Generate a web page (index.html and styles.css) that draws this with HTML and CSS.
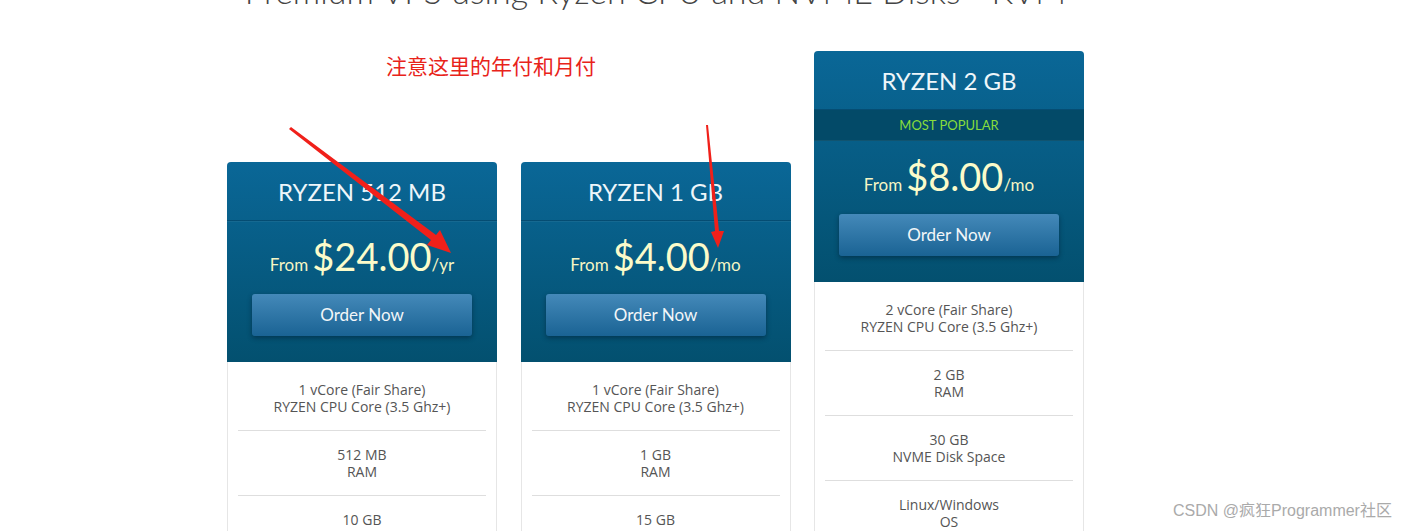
FILE: index.html
```html
<!DOCTYPE html>
<html lang="en">
<head>
  <meta charset="UTF-8">
  <meta name="viewport" content="width=device-width, initial-scale=1.0">
  <title>Ryzen VPS</title>
  <link rel="stylesheet" href="styles.css">
</head>
<body>
  <main class="wrap">
    <h1 class="page-title">Premium VPS using Ryzen CPU and NVME Disks - KVM</h1>

    <section class="plans">
      <div class="plan plan-low">
        <div class="plan-head">
          <h2 class="plan-name">RYZEN 512 MB</h2>
          <div class="plan-price">
            <p class="price"><span class="from">From</span> <span class="amount">$24.00</span><span class="cycle">/yr</span></p>
            <a class="order-btn" href="#">Order Now</a>
          </div>
        </div>
        <ul class="features">
          <li>1 vCore (Fair Share)<br>RYZEN CPU Core (3.5 Ghz+)</li>
          <li>512 MB<br>RAM</li>
          <li>10 GB<br>NVME Disk Space</li>
        </ul>
      </div>

      <div class="plan plan-low">
        <div class="plan-head">
          <h2 class="plan-name">RYZEN 1 GB</h2>
          <div class="plan-price">
            <p class="price"><span class="from">From</span> <span class="amount">$4.00</span><span class="cycle">/mo</span></p>
            <a class="order-btn" href="#">Order Now</a>
          </div>
        </div>
        <ul class="features">
          <li>1 vCore (Fair Share)<br>RYZEN CPU Core (3.5 Ghz+)</li>
          <li>1 GB<br>RAM</li>
          <li>15 GB<br>NVME Disk Space</li>
        </ul>
      </div>

      <div class="plan">
        <div class="plan-head">
          <h2 class="plan-name">RYZEN 2 GB</h2>
          <div class="popular">MOST POPULAR</div>
          <div class="plan-price">
            <p class="price"><span class="from">From</span> <span class="amount">$8.00</span><span class="cycle">/mo</span></p>
            <a class="order-btn" href="#">Order Now</a>
          </div>
        </div>
        <ul class="features">
          <li>2 vCore (Fair Share)<br>RYZEN CPU Core (3.5 Ghz+)</li>
          <li>2 GB<br>RAM</li>
          <li>30 GB<br>NVME Disk Space</li>
          <li>Linux/Windows<br>OS</li>
        </ul>
      </div>
    </section>
  </main>

  <!-- annotation layer drawn over the screenshot -->
  <div class="note">注意这里的年付和月付</div>
  <svg class="arrows" width="1405" height="531" viewBox="0 0 1405 531">
    <polygon fill="#f0201a" points="289,129 291,127 436,235 440,230 451,253 427,245 431,240"/>
    <polygon fill="#f0201a" points="706,125 708,125 719,231 724,231 718,248 711,232 715,231"/>
  </svg>
  <div class="watermark">CSDN @疯狂Programmer社区</div>
</body>
</html>
```

FILE: styles.css
```css
* {
  padding: 0;
  margin: 0;
  box-sizing: border-box;
}
html, body {
  height: 100%;
  overflow: hidden;
}
body {
  background-color: #fff;
  font-family: "Open Sans", "Liberation Sans", sans-serif;
  color: #555;
}
.wrap {
  width: 857px;
  margin-left: 227px;
}
.page-title {
  margin: -29px -30px 0 -30px;
  height: 80px;
  font-family: Lato, "Liberation Sans", sans-serif;
  font-weight: 300;
  font-size: 34px;
  line-height: 40px;
  color: #444;
  text-align: center;
  white-space: nowrap;
}
.plans {
  display: flex;
  align-items: flex-start;
  gap: 23.5px;
}
.plan {
  width: 270px;
  flex: none;
  border-radius: 4px 4px 0 0;
  border: 1px solid #e6e6e6;
  border-top: none;
  background-color: #fff;
}
.plan-low {
  margin-top: 111px;
}
.plan-head {
  margin: 0 -1px;
  border-radius: 4px 4px 0 0;
  background: linear-gradient(#0a6797, #03506f);
  color: #fff;
  text-align: center;
}
.plan-name {
  height: 59px;
  font-family: Lato, "Liberation Sans", sans-serif;
  font-weight: 400;
  font-size: 24px;
  line-height: 59px;
  color: #eef6fa;
  border-bottom: 1px solid rgba(0, 40, 70, .35);
  box-shadow: 0 1px 0 rgba(255, 255, 255, .06);
}
.popular {
  height: 31px;
  background-color: #034a68;
  font-family: Lato, "Liberation Sans", sans-serif;
  font-size: 13px;
  line-height: 31px;
  color: #86dc3c;
  border-bottom: 1px solid rgba(255, 255, 255, .06);
}
.plan-price {
  height: 141px;
  padding-top: 10px;
}
.price {
  height: 63px;
  font-family: Lato, "Liberation Sans", sans-serif;
  color: #f6f6c4;
  line-height: 50px;
}
.price .from {
  font-size: 17px;
}
.price .amount {
  font-size: 38px;
  color: #fbfbca;
}
.price .cycle {
  font-size: 17px;
}
.order-btn {
  display: block;
  width: 220px;
  height: 42px;
  margin: 0 auto;
  border-radius: 3px;
  background: linear-gradient(#4489b9, #1a6394);
  box-shadow: 0 2px 5px rgba(0, 20, 40, .45);
  font-family: Lato, "Liberation Sans", sans-serif;
  font-size: 17px;
  line-height: 42px;
  color: #f2f6f8;
  text-decoration: none;
}
.features {
  list-style: none;
  padding: 4px 10px 0;
  text-align: center;
  font-size: 14px;
  line-height: 17px;
  color: #555;
}
.features li {
  padding: 15px 0;
  border-bottom: 1px solid #dedede;
}
.note {
  position: absolute;
  left: 386px;
  top: 51px;
  font-family: "Noto Sans CJK SC", sans-serif;
  font-size: 21px;
  line-height: 28px;
  color: #e8231a;
}
.arrows {
  position: absolute;
  left: 0;
  top: 0;
  pointer-events: none;
}
.watermark {
  position: absolute;
  left: 1173px;
  top: 500px;
  font-family: "Liberation Sans", "Noto Sans CJK SC", sans-serif;
  font-size: 16px;
  line-height: 22px;
  color: #aaa;
  white-space: nowrap;
}
```
